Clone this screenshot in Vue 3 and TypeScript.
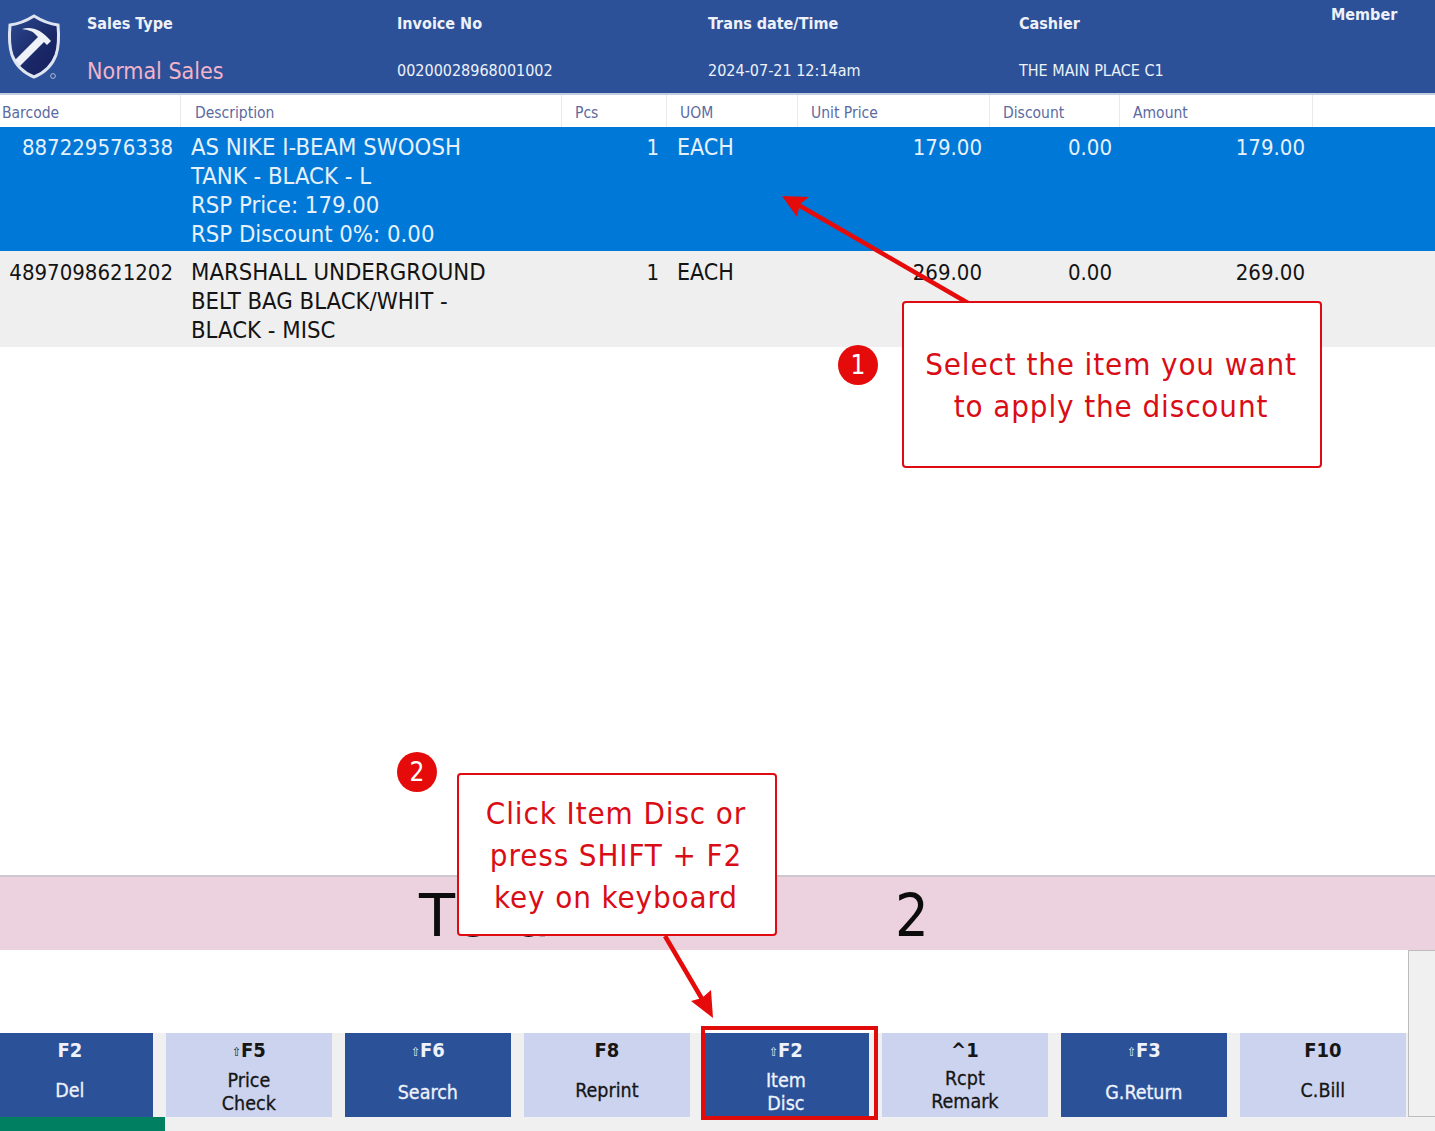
<script setup lang="ts">
interface Row { code: string; desc: string[]; pcs: string; uom: string; price: string; disc: string; amount: string; selected?: boolean }
interface Btn { shift?: string; key: string; label: string[]; dark: boolean }

const heads = ['Sales Type', 'Invoice No', 'Trans date/Time', 'Cashier']
const values = ['Normal Sales', '00200028968001002', '2024-07-21 12:14am', 'THE MAIN PLACE C1']
const columns = ['Barcode', 'Description', 'Pcs', 'UOM', 'Unit Price', 'Discount', 'Amount', '']
const rows: Row[] = [
  { code: '887229576338', desc: ['AS NIKE I-BEAM SWOOSH', 'TANK - BLACK - L', 'RSP Price: 179.00', 'RSP Discount 0%: 0.00'], pcs: '1', uom: 'EACH', price: '179.00', disc: '0.00', amount: '179.00', selected: true },
  { code: '4897098621202', desc: ['MARSHALL UNDERGROUND', 'BELT BAG BLACK/WHIT -', 'BLACK - MISC'], pcs: '1', uom: 'EACH', price: '269.00', disc: '0.00', amount: '269.00' },
]
const buttons: Btn[] = [
  { key: 'F2', label: ['Del'], dark: true },
  { shift: '⇧', key: 'F5', label: ['Price', 'Check'], dark: false },
  { shift: '⇧', key: 'F6', label: ['Search'], dark: true },
  { key: 'F8', label: ['Reprint'], dark: false },
  { shift: '⇧', key: 'F2', label: ['Item', 'Disc'], dark: true },
  { key: '^1', label: ['Rcpt', 'Remark'], dark: false },
  { shift: '⇧', key: 'F3', label: ['G.Return'], dark: true },
  { key: 'F10', label: ['C.Bill'], dark: false },
]
</script>

<template>
  <div class="page">
    <header class="top">
      <div class="logo">
        <svg width="87" height="93" viewBox="0 0 87 93">
          <defs>
            <linearGradient id="sh" x1="0" y1="0" x2="1" y2="1">
              <stop offset="0" stop-color="#2c4a90" />
              <stop offset="0.6" stop-color="#1a2767" />
              <stop offset="1" stop-color="#151f5c" />
            </linearGradient>
          </defs>
          <path d="M34 16 C42 21 50 24 58 25 C59 36 59 46 56 55 C52 66 44 73 34 77 C24 73 16 66 12 55 C9 46 9 36 10 25 C18 24 26 21 34 16 Z" fill="url(#sh)" stroke="#dfe5f0" stroke-width="3" />
          <path d="M22 29 C31 26 41 29 51 41 L47 45 L44 42 L20 66 L15 60 L38 37 L36 35 C33 31 28 30 22 29 Z" fill="#eef1f7" />
          <circle cx="53" cy="76" r="2.4" fill="none" stroke="#aeb9d4" stroke-width="1" />
        </svg>
      </div>
      <div v-for="(h, i) in heads" :key="h" class="head-cell">
        <div class="head-label">{{ h }}</div>
        <div class="head-value" :class="{ sales: i === 0 }">{{ values[i] }}</div>
      </div>
      <div class="head-cell member"><div class="head-label">Member</div></div>
    </header>

    <div class="grid col-head">
      <div v-for="c in columns" :key="c" class="col">{{ c }}</div>
    </div>

    <div v-for="r in rows" :key="r.code" class="grid row" :class="{ selected: r.selected }">
      <div class="cell right num">{{ r.code }}</div>
      <div class="cell desc"><div v-for="d in r.desc" :key="d">{{ d }}</div></div>
      <div class="cell right num">{{ r.pcs }}</div>
      <div class="cell uom">{{ r.uom }}</div>
      <div class="cell right tight num">{{ r.price }}</div>
      <div class="cell right tight num">{{ r.disc }}</div>
      <div class="cell right tight num">{{ r.amount }}</div>
    </div>

    <div class="spacer"></div>

    <div class="total">
      <span class="total-label">Total</span>
      <span class="total-value">2</span>
    </div>

    <div class="lower">
      <div class="lower-main">
        <div class="entry"></div>
        <div class="buttons">
          <div v-for="(b, i) in buttons" :key="i" class="btn" :class="{ dark: b.dark }">
            <div class="btn-key"><span v-if="b.shift" class="shift">{{ b.shift }}</span>{{ b.key }}</div>
            <div class="btn-label"><div v-for="l in b.label" :key="l">{{ l }}</div></div>
          </div>
        </div>
      </div>
      <div class="side"></div>
    </div>
    <div class="status"><div class="progress"></div></div>

    <svg class="arrows" width="1435" height="1131" viewBox="0 0 1435 1131">
      <path d="M968 303 L795 203" stroke="#e60b0b" stroke-width="4.5" fill="none" />
      <path d="M782 196 L809 197 L800 204 L797 217 Z" fill="#e60b0b" />
      <path d="M665 936 L705 1004" stroke="#e60b0b" stroke-width="4.5" fill="none" />
      <path d="M713 1018 L691 1001 L702 998 L711 990 Z" fill="#e60b0b" />
    </svg>

    <div class="mark"></div>
    <div class="callout one">Select the item you want<br />to apply the discount</div>
    <div class="badge b1">1</div>
    <div class="callout two">Click Item Disc or<br />press SHIFT + F2<br />key on keyboard</div>
    <div class="badge b2">2</div>
  </div>
</template>

<style scoped>
.page {
  position: relative;
  width: 1435px;
  height: 1131px;
  overflow: hidden;
  display: flex;
  flex-direction: column;
  background: #fff;
  font-family: "DejaVu Sans", sans-serif;
  font-stretch: condensed;
}
.top {
  height: 95px;
  flex: none;
  box-sizing: border-box;
  display: grid;
  grid-template-columns: 87px 310px 311px 311px 312px 1fr;
  background: #2c5199;
  border-bottom: 2px solid #c3cde2;
  color: #fff;
}
.logo { height: 93px; }
.logo svg { display: block; }
.head-cell {
  display: flex;
  flex-direction: column;
  gap: 27px;
  padding-top: 14px;
}
.head-label {
  font-size: 16px;
  line-height: 20px;
  font-weight: 700;
  color: #eef1f8;
  white-space: nowrap;
}
.head-value {
  font-size: 16px;
  line-height: 20px;
  color: #eef1f8;
  white-space: nowrap;
}
.head-value.sales {
  font-size: 23px;
  color: #f2b4c9;
}
.member { padding-top: 5px; }
.grid {
  display: grid;
  grid-template-columns: 181px 381px 105px 131px 192px 130px 193px 1fr;
  flex: none;
}
.col-head {
  height: 32px;
  background: #fff;
  color: #5b6a9f;
  font-size: 15.5px;
  line-height: 36px;
}
.col {
  padding-left: 13px;
  border-right: 1px solid #e9e9e9;
}
.col:first-child { padding-left: 2px; }
.col:nth-child(2) { padding-left: 14px; }
.col:last-child { border-right: none; }
.row {
  background: #efefef;
  color: #141414;
  font-size: 23.7px;
  line-height: 29px;
  padding: 7px 0 2px;
}
.row.selected {
  background: #0078d7;
  color: #e6f1fb;
  padding: 6px 0 2px;
}
.cell { white-space: nowrap; }
.num { font-size: 22px; }
.right { text-align: right; padding-right: 8px; }
.desc { padding-left: 10px; }
.uom { padding-left: 10px; font-size: 23px; }
.spacer { flex: 1; }
.total {
  height: 75px;
  flex: none;
  box-sizing: border-box;
  border-top: 2px solid #cfc6cf;
  background: #ecd2de;
  position: relative;
  color: #0c0c0c;
  font-size: 59px;
  line-height: 74px;
}
.total-label {
  position: absolute;
  left: 419px;
  top: 2px;
  font-stretch: normal;
  font-kerning: none;
}
.total-value { position: absolute; left: 895px; top: 2px; }
.lower {
  height: 167px;
  flex: none;
  display: flex;
}
.lower-main {
  width: 1408px;
  display: flex;
  flex-direction: column;
  overflow: hidden;
}
.entry { height: 83px; background: #fff; }
.buttons {
  height: 84px;
  display: grid;
  grid-template-columns: repeat(8, 166.5px);
  column-gap: 12.5px;
  margin-left: -13.4px;
  background: #f0f0f0;
}
.btn {
  background: #cbd3ef;
  color: #161616;
  text-align: center;
  padding-top: 5px;
  box-sizing: border-box;
}
.btn.dark { background: #2b5199; color: #eef2fa; }
.btn-key {
  font-size: 20px;
  line-height: 24px;
  font-weight: 700;
}
.shift {
  font-size: 12px;
  font-weight: 400;
  vertical-align: 1px;
}
.btn-label {
  margin-top: 3px;
  height: 50px;
  display: flex;
  flex-direction: column;
  justify-content: center;
  font-size: 19.5px;
  line-height: 23px;
  -webkit-text-stroke: 0.3px currentColor;
}
.side {
  flex: 1;
  box-sizing: border-box;
  background: #f0f0f0;
  border: 1px solid #bdbdbd;
  border-right: none;
}
.status {
  flex: none;
  height: 14px;
  background: #f0f0f0;
}
.progress {
  width: 165px;
  height: 100%;
  background: #008060;
}
.arrows {
  position: absolute;
  inset: 0;
  pointer-events: none;
}
.mark {
  position: absolute;
  left: 701px;
  top: 1026px;
  width: 177px;
  height: 94px;
  box-sizing: border-box;
  border: 4px solid #e00b0b;
}
.callout {
  position: absolute;
  box-sizing: border-box;
  display: flex;
  align-items: center;
  justify-content: center;
  text-align: center;
  background: #fff;
  border: 2px solid #df0a12;
  border-radius: 4px;
  color: #d90d15;
  font-size: 31px;
  line-height: 42px;
  letter-spacing: 0.9px;
}
.one { left: 902px; top: 301px; width: 420px; height: 167px; padding-right: 2px; }
.two { left: 457px; top: 773px; width: 320px; height: 163px; padding-right: 2px; }
.badge {
  position: absolute;
  width: 40px;
  height: 40px;
  border-radius: 50%;
  background: #e60b0b;
  color: #fff;
  font-size: 26px;
  line-height: 40px;
  text-align: center;
}
.b1 { left: 838px; top: 345px; }
.b2 { left: 397px; top: 752px; }
</style>
